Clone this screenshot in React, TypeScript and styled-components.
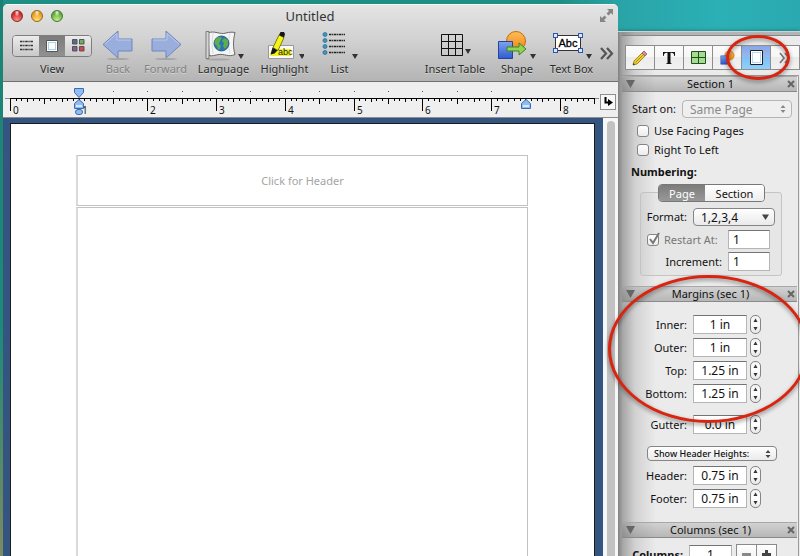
import React from "react";
import styled, { createGlobalStyle, css } from "styled-components";

const GlobalStyle = createGlobalStyle`
  * { box-sizing: border-box; }
  html, body { margin: 0; padding: 0; overflow: hidden; }
  body, button, input, select {
    font-family: "Noto Sans", "Open Sans", sans-serif;
    font-size: 11px;
    color: #111;
  }
  button { padding: 0; border: 0; background: none; }
  svg { display: block; flex: none; }
`;

const Desktop = styled.div`
  position: relative;
  display: grid;
  grid-template-columns: minmax(0, 1fr) 182px;
  height: 100vh;
  padding-left: 3px;
  overflow: hidden;
  background:
    linear-gradient(to bottom, #1b8273 0%, #1f8a78 60%, #4f8a68 80%, #7b8a62 100%) left / 3px 100% no-repeat,
    linear-gradient(to right, #1f8f84 0%, #1f8f84 70%, #29a5a8 78%, #2bb0b5 90%, #2aa9b0 100%);
`;

/* ---------- document window ---------- */

const Window = styled.main`
  position: relative;
  z-index: 1;
  display: flex;
  flex-direction: column;
  min-width: 0;
  margin-top: 4px;
  border-radius: 5px 5px 0 0;
  overflow: hidden;
  background: #efefef;
`;

const Chrome = styled.header`
  border-top: 1px solid #f6f6f6;
  border-bottom: 1px solid #6f6f6f;
  background: linear-gradient(#e4e4e4, #d2d2d2 45%, #b4b4b4);
`;

const TitleBar = styled.div`
  display: grid;
  grid-template-columns: 70px 1fr 70px;
  align-items: center;
  height: 21px;
  padding: 0 4px 0 8px;
`;

const Lights = styled.div`
  display: flex;
  gap: 8px;
`;

const Light = styled.button<{ $from: string; $to: string; $rim: string }>`
  width: 12px;
  height: 12px;
  border: 1px solid ${(p) => p.$rim};
  border-radius: 50%;
  background:
    radial-gradient(ellipse at 50% 15%, rgba(255, 255, 255, 0.9), transparent 35%),
    radial-gradient(circle at 50% 90%, ${(p) => p.$to}, ${(p) => p.$from} 70%);
`;

const Title = styled.h1`
  margin: 0 5px 0 0;
  font-size: 13px;
  line-height: 20px;
  font-weight: 400;
  text-align: center;
  color: #333;
`;

const FullScreen = styled.button`
  justify-self: end;
`;

const Toolbar = styled.nav`
  display: flex;
  height: 55px;
  padding: 4px 3px 0 9px;
`;

const Tool = styled.div<{ $width: number }>`
  display: flex;
  flex-direction: column;
  align-items: center;
  width: ${(p) => p.$width}px;
`;

const ToolButton = styled.button<{ $width: number }>`
  display: flex;
  flex-direction: column;
  align-items: center;
  width: ${(p) => p.$width}px;
`;

const ToolIcon = styled.span`
  display: flex;
  align-items: center;
  justify-content: center;
  height: 31px;
`;

const ToolLabel = styled.span<{ $dim?: boolean }>`
  line-height: 16px;
  white-space: nowrap;
  color: ${(p) => (p.$dim ? "#828282" : "#2c2c2c")};
  text-shadow: 0 1px 0 rgba(255, 255, 255, 0.4);
`;

const Spacer = styled.div`
  flex: 1;
`;

const Gap = styled.div`
  width: 3px;
`;

const More = styled.button`
  width: 16px;
  height: 48px;
`;

const ViewSwitch = styled.div`
  display: flex;
  width: 80px;
  height: 22px;
  border: 1px solid #7d7d7d;
  border-radius: 4px;
  overflow: hidden;
`;

const ViewButton = styled.button<{ $on?: boolean }>`
  display: flex;
  flex: 1;
  align-items: center;
  justify-content: center;
  background: ${(p) => (p.$on ? "linear-gradient(#7b7b7b, #919191)" : "linear-gradient(#ececec, #c9c9c9)")};
`;

const RulerBar = styled.div`
  position: relative;
  display: flex;
  height: 36px;
  border-bottom: 1px solid #8d8d8d;
  background: #efefef;
`;

const RulerScale = styled.div`
  flex: 1;
  min-width: 0;
  overflow: hidden;
`;

const TabButton = styled.button`
  display: flex;
  align-items: center;
  justify-content: center;
  width: 16px;
  height: 16px;
  margin: 12px 2px 0 0;
  border: 1px solid #8f8f8f;
  background: #f8f8f8;
`;

const Workspace = styled.div`
  display: flex;
  flex: 1;
  min-height: 0;
`;

const Canvas = styled.div`
  display: flex;
  flex: 1;
  min-width: 0;
  padding: 5px 8px 0 7px;
  background: #34557f;
`;

const Paper = styled.article`
  display: flex;
  flex: 1;
  flex-direction: column;
  gap: 1px;
  padding: 31px 66px 0 65px;
  border: 1px solid #1c1c1c;
  border-width: 1px 1px 0;
  background: #fff;
`;

const frame = css`
  border: 1px solid #c2c2c2;
  border-left: 2px solid #dadada;
`;

const HeaderArea = styled.button`
  ${frame}
  height: 51px;
  font-size: 11px;
  color: #a4a4a4;
`;

const BodyArea = styled.div`
  ${frame}
  flex: 1;
  border-bottom: 0;
`;

const ScrollTrack = styled.div`
  width: 15px;
  padding: 3px 3px 0 4px;
  background: #f7f7f7;
`;

const ScrollThumb = styled.div`
  height: 100%;
  border-radius: 4px 4px 0 0;
  background: #c2c2c2;
`;

/* ---------- inspector ---------- */

const Inspector = styled.aside`
  display: flex;
  flex-direction: column;
  min-height: 0;
  margin-top: 31px;
  padding-left: 3px;
  border-top: 1px solid #d0d0d0;
  background:
    linear-gradient(to right, #808080, #9c9c9c 3px, rgba(125, 125, 125, 0.65) 4px, rgba(150, 150, 150, 0.3) 17px, transparent 38px),
    linear-gradient(#b4b4b4 3px, #858585 3px, #858585 4px, #ebebeb 4px);
  box-shadow: 0 0 4px rgba(0, 0, 0, 0.35);
`;

const Tabs = styled.div`
  display: flex;
  height: 25px;
  margin: 13px 0 5px 4px;
  border: 1px solid #8e8e8e;
  border-right-width: 1px;
`;

const Tab = styled.button<{ $on?: boolean }>`
  display: flex;
  flex: 1;
  align-items: center;
  justify-content: center;
  border-right: 1px solid #8e8e8e;
  background: ${(p) =>
    p.$on
      ? "linear-gradient(#86a8e6, #9bb9ee 50%, #7cc0f6 50%, #90d0fa)"
      : "linear-gradient(#fbfbfb, #f6f6f6 50%, #ececec 50%, #f2f2f2)"};
  &:last-child { border-right: 0; }
`;

const Sections = styled.div`
  flex: 1;
  min-height: 0;
  margin-right: 1px;
  border: 1px solid #9a9a9a;
  border-width: 1px 1px 0;
  overflow: hidden;
`;

const SectionHead = styled.h2`
  display: grid;
  grid-template-columns: 16px 1fr 16px;
  align-items: center;
  height: 16px;
  margin: 0 1px 0 0;
  padding: 0 2px 0 4px;
  border-top: 1px solid #a8a8a8;
  border-bottom: 1px solid #8a8a8a;
  background: linear-gradient(rgba(150, 150, 150, 0.3), rgba(110, 110, 110, 0.42));
  font-size: 11px;
  line-height: 14px;
  font-weight: 400;
  text-align: center;
`;

const CloseButton = styled.button`
  justify-self: end;
`;

const Body = styled.div<{ $top: number; $height?: number }>`
  padding-top: ${(p) => p.$top}px;
  ${(p) => p.$height && `height: ${p.$height}px;`}
`;

const Row = styled.div<{ $gap?: number }>`
  display: flex;
  align-items: center;
  height: 19px;
  margin-bottom: ${(p) => p.$gap ?? 4}px;
`;

const Label = styled.label<{ $width: number; $bold?: boolean; $dim?: boolean }>`
  width: ${(p) => p.$width}px;
  padding-right: 6px;
  line-height: 19px;
  text-align: right;
  white-space: nowrap;
  font-weight: ${(p) => (p.$bold ? 700 : 400)};
  color: ${(p) => (p.$dim ? "#777" : "#111")};
`;

const Check = styled.label<{ $dim?: boolean }>`
  display: flex;
  align-items: center;
  gap: 5px;
  height: 19px;
  padding-left: 15px;
  white-space: nowrap;
  color: ${(p) => (p.$dim ? "#777" : "#111")};
`;

const Box = styled.input`
  appearance: none;
  width: 12px;
  height: 12px;
  margin: 0;
  border: 1px solid #858585;
  border-radius: 3px;
  background: linear-gradient(#fff, #ececec);
`;

const CheckWrap = styled.span`
  position: relative;
  display: flex;
  svg { position: absolute; left: 0; bottom: 0; }
`;

const RestartCheck = styled(Check)`
  width: 87px;
  padding-left: 6px;
`;

const Field = styled.input<{ $width: number; $left?: boolean }>`
  width: ${(p) => p.$width}px;
  height: 19px;
  padding: ${(p) => (p.$left ? "0 4px" : "0")};
  border: 1px solid #b5b5b5;
  border-top-color: #747474;
  border-radius: 0;
  background: #fff;
  font-size: 12px;
  text-align: ${(p) => (p.$left ? "left" : "center")};
`;

const SelectWrap = styled.span<{ $width: number }>`
  position: relative;
  display: flex;
  width: ${(p) => p.$width}px;
  svg { position: absolute; right: 6px; top: 50%; margin-top: -5px; pointer-events: none; }
`;

const Select = styled.select<{ $height: number; $pad: number; $small?: boolean }>`
  appearance: none;
  width: 100%;
  height: ${(p) => p.$height}px;
  padding: 0 0 0 ${(p) => p.$pad}px;
  border: 1px solid #858585;
  border-radius: 4px;
  background: linear-gradient(#fff, #f4f4f4 50%, #eaeaea);
  font-size: ${(p) => (p.$small ? 9 : 12)}px;
  ${(p) => p.$small && "font-weight: 500;"}
  &:disabled { opacity: 1; color: #8a8a8a; border-color: #b5b5b5; background: #efefef; }
`;

const Numbering = styled.h3`
  margin: 3px 0 0 9px;
  font-size: 11px;
  line-height: 19px;
  font-weight: 700;
`;

const Group = styled.div`
  height: 84px;
  margin: 11px 16px 9px 18px;
  border: 1px solid #c4c4c4;
  border-radius: 3px;
  background: rgba(0, 0, 0, 0.02);
`;

const Segments = styled.div`
  display: flex;
  width: 107px;
  height: 18px;
  margin: -9px auto 5px 17px;
  border: 1px solid #777;
  border-radius: 4px;
  overflow: hidden;
`;

const Segment = styled.button<{ $on?: boolean; $width: number }>`
  width: ${(p) => p.$width}px;
  line-height: 15px;
  color: ${(p) => (p.$on ? "#fff" : "#111")};
  background: ${(p) => (p.$on ? "linear-gradient(#7c7c7c, #989898)" : "linear-gradient(#fff, #eee)")};
`;

const Stepper = styled.span`
  display: flex;
  flex-direction: column;
  width: 11px;
  height: 19px;
  margin-left: 3px;
  border: 1px solid #858585;
  border-radius: 5px;
  overflow: hidden;
  background: linear-gradient(#f2f2f2, #fff 50%, #e6e6e6);
`;

const Step = styled.button`
  display: flex;
  flex: 1;
  align-items: center;
  justify-content: center;
`;

const HeightsRow = styled.div`
  margin: 12px 0 5px 25px;
`;

const SquareButton = styled.button`
  display: flex;
  align-items: center;
  justify-content: center;
  width: 21px;
  height: 21px;
  margin-right: -1px;
  border: 1px solid #8a8a8a;
  background: linear-gradient(#fff, #ededed);
`;

const Minus = styled(SquareButton)`
  margin-left: 4px;
`;

/* Hand-drawn emphasis rings laid over the desktop. */
const Ring = styled.div<{ $right: number; $top: number; $width: number; $height: number }>`
  position: absolute;
  z-index: 2;
  right: ${(p) => p.$right}px;
  top: ${(p) => p.$top}px;
  width: ${(p) => p.$width}px;
  height: ${(p) => p.$height}px;
  border: 3px solid #d9240f;
  border-radius: 50%;
  filter: drop-shadow(0 2px 2px rgba(0, 0, 0, 0.45));
  pointer-events: none;
`;

/* ---------- icons ---------- */

const Caret = ({ x, y }: { x: number; y: number }) => <path d={`M${x} ${y}h6l-3 5z`} fill="#333" />;

const ArrowIcon = ({ flip }: { flip?: boolean }) => (
  <svg width="32" height="31" viewBox="0 0 32 31">
    <ellipse cx="16" cy="29" rx="11" ry="1" fill="#888" opacity=".5" />
    <g transform={flip ? "translate(32 0) scale(-1 1)" : undefined}>
      <path d="M1 14.500 16 1v8h14v12H16v7z" fill="#99aedc" stroke="#6f86bd" />
      <path d="M3 14 15 3.500V10h14" fill="none" stroke="#bccbee" />
    </g>
  </svg>
);

const LanguageIcon = () => (
  <svg width="40" height="31" viewBox="0 0 40 31">
    <ellipse cx="14" cy="29.500" rx="12" ry="1" fill="#888" opacity=".5" />
    <path d="M4 3c6-3 12 2 18 0 4-1 6-1 9-.500-2 8-2 15 0 22-6 3-11-1-16 0-4 .500-7 2-10 1z" fill="#f5f5f5" stroke="#666" />
    <path d="M2 1.500h3v27H2z" fill="#d5d5d5" stroke="#666" strokeWidth=".8" />
    <path d="M9 3c-1 7-1 14 0 21M26 3c-2 7-2 14 0 21" fill="none" stroke="#ddd" />
    <circle cx="17.500" cy="13.500" r="7.500" fill="#2b74b5" stroke="#184f80" strokeWidth=".8" />
    <path d="M12 9c2-3 5-2 6-1l-2 3-1 3 2 2-2 4c-2-1-1-4-3-5s-2-4 0-6zM20 8l4 2 0 5-3 4-2-3 1-3-2-2z" fill="#5fae4d" />
    <Caret x={34} y={24} />
  </svg>
);

const HighlightIcon = () => (
  <svg width="38" height="31" viewBox="0 0 38 31">
    <path d="M2.500 15.500h25v13h-25z" fill="#fafafa" stroke="#999" />
    <path d="M6 19h19v7H4z" fill="#f3f31a" />
    <text x="12" y="25" fontSize="9" fontFamily="Liberation Sans, sans-serif" fill="#222">abc</text>
    <path d="M13 5l5 2.500-6 13-5-3z" fill="#f4f41c" stroke="#7b7b10" />
    <path d="M13 5l1.500-3h3.500l1 2-1 3.500zM6.500 17.500l5 3-3 3-4 1z" fill="#161616" />
    <Caret x={33} y={24} />
  </svg>
);

const ListIcon = () => (
  <svg width="36" height="31" viewBox="0 0 36 31">
    {[4, 10, 16, 22].map((y) => (
      <g key={y}>
        <circle cx="3" cy={y + 0.5} r="2" fill="#3d96c6" stroke="#23658c" strokeWidth=".7" />
        <path d={`M7 ${y + 0.5}h16`} stroke="#222" strokeWidth="1.500" strokeDasharray="2.500 .6 1.300 .6" />
      </g>
    ))}
    <Caret x={30} y={24} />
  </svg>
);

const TableIcon = () => (
  <svg width="31" height="31" viewBox="0 0 31 31">
    <path d="M1.500 4.500h21v21h-21zM8.500 4.500v21M15.500 4.500v21M1.500 11.500h21M1.500 18.500h21" fill="none" stroke="#111" />
    <Caret x={25} y={19} />
  </svg>
);

const ShapesArt = () => (
  <>
    <defs>
      <linearGradient id="orange" x2="0" y2="1"><stop stopColor="#fdbd5a" /><stop offset="1" stopColor="#ee8510" /></linearGradient>
      <linearGradient id="blue" x2="0" y2="1"><stop stopColor="#7fa2ef" /><stop offset="1" stopColor="#2f5bd0" /></linearGradient>
    </defs>
    <circle cx="19" cy="11" r="9.500" fill="url(#orange)" stroke="#c66b0c" />
    <path d="M1.500 11.500h14v17h-14z" fill="url(#blue)" stroke="#2343a0" />
  </>
);

const ShapeIcon = () => (
  <svg width="40" height="31" viewBox="0 0 40 31">
    <ShapesArt />
    <path d="M10 17h12v-4l7 6-7 6v-4H10z" fill="#8fd456" stroke="#3f8420" />
    <Caret x={33} y={24} />
  </svg>
);

const TextBoxIcon = () => (
  <svg width="42" height="31" viewBox="0 0 42 31">
    <path d="M4.500 5.500h25v15h-25z" fill="#fff" stroke="#333" />
    <text x="17" y="17" fontSize="11" textAnchor="middle" fontFamily="Liberation Sans, sans-serif" fill="#000" stroke="#000" strokeWidth=".3">Abc</text>
    {[[2.5, 3.5], [27.5, 3.5], [2.5, 18.5], [27.5, 18.5]].map(([x, y]) => (
      <rect key={`${x}-${y}`} x={x} y={y} width="4" height="4" fill="#dbe5ff" stroke="#2e55a8" />
    ))}
    <Caret x={35} y={24} />
  </svg>
);

const Chevrons = ({ color }: { color: string }) => (
  <svg width="15" height="48" viewBox="0 0 15 48">
    <path d="M2 18l5 5.500-5 5.500M8 18l5 5.500L8 29" fill="none" stroke={color} strokeWidth="2.200" />
  </svg>
);

const Triangle = () => (
  <svg width="9" height="8" viewBox="0 0 9 8"><path d="M0 0h9L4.500 8z" fill="#666" /></svg>
);

const Cross = () => (
  <svg width="8" height="8" viewBox="0 0 8 8"><path d="M1 1l6 6M7 1L1 7" stroke="#666" strokeWidth="2" /></svg>
);

const UpDown = ({ color = "#444" }: { color?: string }) => (
  <svg width="6" height="10" viewBox="0 0 6 10"><path d="M0.500 4L3 1l2.500 3zM0.500 6L3 9l2.500-3z" fill={color} /></svg>
);

const INCH = 68.7;

const Ruler = () => {
  const ticks: string[] = [];
  for (let i = 0; i <= 102; i += 1) {
    const x = Math.round(7 + (i * INCH) / 12) + 0.5;
    const end = i % 12 === 0 ? 29 : i % 6 === 0 ? 22 : i % 3 === 0 ? 20 : 19;
    ticks.push(`M${x} 16V${end}`);
  }
  const whole = Array.from({ length: 9 }, (_, i) => i);
  const dots = Array.from({ length: 12 }, (_, i) => 1.5 + i * 0.5);
  const pin = "M-4.500 9.500h9V4.500L0 .500l-4.500 4z";
  return (
    <svg width="596" height="35" viewBox="0 0 596 35">
      <path d="M2 16.500h6M592 16.500h4" stroke="#888" />
      <path d="M7 16.500h585" stroke="#000" />
      <path d={ticks.join("")} stroke="#000" />
      {dots.map((d) => <rect key={d} x={Math.round(7 + d * INCH)} y="9" width="1" height="1" fill="#555" />)}
      {whole.map((n) => (
        <text key={n} x={Math.round(10 + n * INCH)} y="32" fontSize="10" fill="#111">{n}</text>
      ))}
      <g fill="#8ebcf5" stroke="#3f6cb0">
        <path d="M-4.500 .500h9v4L0 9.500l-4.500-5z" transform="translate(76 6)" />
        <path d={pin} transform="translate(76 17)" />
        <rect x="72.500" y="27.500" width="7" height="5" rx="2.500" />
        <path d={pin} transform="translate(523 17)" />
      </g>
      <path d="M73 24h6M520 24h6" stroke="#d5e9ff" strokeWidth="2" />
    </svg>
  );
};

/* ---------- composed parts ---------- */

const Head = ({ title }: { title: string }) => (
  <SectionHead>
    <button aria-label={`Collapse ${title}`}><Triangle /></button>
    <span>{title}</span>
    <CloseButton aria-label={`Close ${title}`}><Cross /></CloseButton>
  </SectionHead>
);

const Measure = ({ name, value, gap }: { name: string; value: string; gap?: number }) => {
  const id = `measure-${name.toLowerCase()}`;
  return (
    <Row $gap={gap}>
      <Label htmlFor={id} $width={71}>{name}:</Label>
      <Field id={id} $width={54} defaultValue={value} />
      <Stepper>
        <Step aria-label={`Increase ${name}`}>
          <svg width="5" height="4" viewBox="0 0 5 4"><path d="M0.500 4L2.500 0.500 4.500 4z" fill="#333" /></svg>
        </Step>
        <Step aria-label={`Decrease ${name}`}>
          <svg width="5" height="4" viewBox="0 0 5 4"><path d="M0.500 0h4L2.500 3.500z" fill="#333" /></svg>
        </Step>
      </Stepper>
    </Row>
  );
};

const DocumentWindow = () => (
  <Window>
    <Chrome>
      <TitleBar>
        <Lights>
          <Light aria-label="Close" $from="#c8282a" $to="#ff8f86" $rim="#8a2a28" />
          <Light aria-label="Minimize" $from="#e59a1c" $to="#ffe27a" $rim="#96661c" />
          <Light aria-label="Zoom" $from="#5fa83a" $to="#c6f08e" $rim="#447a2c" />
        </Lights>
        <Title>Untitled</Title>
        <FullScreen aria-label="Full screen">
          <svg width="15" height="15" viewBox="0 0 15 15" fill="#858585">
            <path d="M8 1h6v6l-2-2-2.500 2.500-2-2L10 3zM1 8l2 2 2.500-2.500 2 2L5 12l2 2H1z" />
          </svg>
        </FullScreen>
      </TitleBar>
      <Toolbar>
        <Tool $width={80}>
          <ToolIcon>
            <ViewSwitch>
              <ViewButton aria-label="Draft view">
                <svg width="13" height="11" viewBox="0 0 13 11">
                  <path d="M0 1.500h13M0 5.500h13M0 9.500h13" stroke="#333" strokeWidth="1.500" strokeDasharray="2.500 .7 1.300 .7" />
                </svg>
              </ViewButton>
              <ViewButton $on aria-label="Page view">
                <svg width="12" height="12" viewBox="0 0 12 12">
                  <path d="M.5.500h11v11H.5z" fill="#fff" stroke="#555" />
                  <path d="M2.500 2.500h7v7h-7z" fill="none" stroke="#4aa9dd" strokeDasharray="1 1" />
                </svg>
              </ViewButton>
              <ViewButton aria-label="Thumbnail view">
                <svg width="13" height="13" viewBox="0 0 13 13" stroke="#555">
                  <path d="M.5.500h4.500v4.500H.5z" fill="#4f6f96" />
                  <path d="M7.500.500H12v4.500H7.500z" fill="#6fae5c" />
                  <path d="M.5 7.500h4.500V12H.5z" fill="#8a5c98" />
                  <path d="M7.500 7.500H12V12H7.500z" fill="#d84444" />
                </svg>
              </ViewButton>
            </ViewSwitch>
          </ToolIcon>
          <ToolLabel>View</ToolLabel>
        </Tool>
        <Gap />
        <ToolButton $width={46}><ToolIcon><ArrowIcon /></ToolIcon><ToolLabel $dim>Back</ToolLabel></ToolButton>
        <ToolButton $width={49}><ToolIcon><ArrowIcon flip /></ToolIcon><ToolLabel $dim>Forward</ToolLabel></ToolButton>
        <ToolButton $width={67}><ToolIcon><LanguageIcon /></ToolIcon><ToolLabel>Language</ToolLabel></ToolButton>
        <ToolButton $width={55}><ToolIcon><HighlightIcon /></ToolIcon><ToolLabel>Highlight</ToolLabel></ToolButton>
        <ToolButton $width={55}><ToolIcon><ListIcon /></ToolIcon><ToolLabel>List</ToolLabel></ToolButton>
        <Spacer />
        <ToolButton $width={70}><ToolIcon><TableIcon /></ToolIcon><ToolLabel>Insert Table</ToolLabel></ToolButton>
        <ToolButton $width={54}><ToolIcon><ShapeIcon /></ToolIcon><ToolLabel>Shape</ToolLabel></ToolButton>
        <ToolButton $width={55}><ToolIcon><TextBoxIcon /></ToolIcon><ToolLabel>Text Box</ToolLabel></ToolButton>
        <More aria-label="More tools"><Chevrons color="#555" /></More>
      </Toolbar>
    </Chrome>
    <RulerBar>
      <RulerScale><Ruler /></RulerScale>
      <TabButton aria-label="Tab stop">
        <svg width="9" height="10" viewBox="0 0 9 10">
          <path d="M1.500 0v5.500H5" fill="none" stroke="#000" strokeWidth="2" /><path d="M4 2l5 3.500L4 9z" />
        </svg>
      </TabButton>
    </RulerBar>
    <Workspace>
      <Canvas>
        <Paper>
          <HeaderArea>Click for Header</HeaderArea>
          <BodyArea />
        </Paper>
      </Canvas>
      <ScrollTrack><ScrollThumb /></ScrollTrack>
    </Workspace>
  </Window>
);

const InspectorPanel = () => (
  <Inspector>
    <Tabs>
      <Tab aria-label="Style">
        <svg width="16" height="16" viewBox="0 0 16 16">
          <path d="M1 15l1-4 8-8 3 3-8 8z" fill="#eccb2c" stroke="#8a7420" strokeWidth=".8" />
          <path d="M3.500 12.500l8-8" stroke="#b5941b" />
          <path d="M10 3l2-2 3 3-2 2z" fill="#e08a96" stroke="#8c5660" strokeWidth=".8" />
          <path d="M1 15l.6-2 1.400 1.400z" fill="#222" />
        </svg>
      </Tab>
      <Tab aria-label="Text">
        <svg width="14" height="14" viewBox="0 0 14 14">
          <path d="M1 1h12v4h-.7c-.3-2.200-1-3.200-3-3.200h-.8v9.700c0 1 .5 1 1.500 1.200v.3H4v-.3c1-.2 1.500-.2 1.500-1.200V1.800h-.8c-2 0-2.700 1-3 3.200H1z" fill="#111" />
        </svg>
      </Tab>
      <Tab aria-label="Table">
        <svg width="15" height="13" viewBox="0 0 15 13">
          <path d="M.5.500h14v12H.5zM7.500.500v12M.5 6.500h14" fill="#a4dd92" stroke="#244d1c" />
        </svg>
      </Tab>
      <Tab aria-label="Shape"><svg width="15" height="15" viewBox="0 0 30 30"><ShapesArt /></svg></Tab>
      <Tab $on aria-label="Section">
        <svg width="13" height="15" viewBox="0 0 13 15">
          <path d="M.5.500h12v14H.5z" fill="#fff" stroke="#222" />
          <path d="M2.500 2.500h8v10h-8z" fill="none" stroke="#6cb5e2" strokeDasharray="1 1" />
        </svg>
      </Tab>
      <Tab aria-label="More">
        <svg width="12" height="12" viewBox="0 0 12 12"><path d="M1 1l4 5-4 5M6 1l4 5-4 5" fill="none" stroke="#777" strokeWidth="1.700" /></svg>
      </Tab>
    </Tabs>
    <Sections>
      <Head title="Section 1" />
      <Body $top={7} $height={194}>
        <Row $gap={3}>
          <Label htmlFor="start" $width={60}>Start on:</Label>
          <SelectWrap $width={110}>
            <Select id="start" disabled $height={18} $pad={7}><option>Same Page</option></Select>
            <UpDown color="#888" />
          </SelectWrap>
        </Row>
        <Check><Box type="checkbox" />Use Facing Pages</Check>
        <Check><Box type="checkbox" />Right To Left</Check>
        <Numbering>Numbering:</Numbering>
        <Group>
          <Segments>
            <Segment $on $width={46}>Page</Segment>
            <Segment $width={59}>Section</Segment>
          </Segments>
          <Row>
            <Label htmlFor="format" $width={52}>Format:</Label>
            <SelectWrap $width={82}>
              <Select id="format" $height={18} $pad={7}><option>1,2,3,4</option></Select>
              <svg width="7" height="10" viewBox="0 0 7 10"><path d="M0 2.500h7L3.500 8z" fill="#444" /></svg>
            </SelectWrap>
          </Row>
          <Row $gap={3}>
            <RestartCheck $dim>
              <CheckWrap>
                <Box type="checkbox" defaultChecked disabled />
                <svg width="14" height="14" viewBox="0 0 14 14"><path d="M3 7l3 4 6-10" fill="none" stroke="#777" strokeWidth="2" /></svg>
              </CheckWrap>
              Restart At:
            </RestartCheck>
            <Field aria-label="Restart at" $width={42} $left defaultValue="1" />
          </Row>
          <Row>
            <Label htmlFor="increment" $width={87}>Increment:</Label>
            <Field id="increment" $width={42} $left defaultValue="1" />
          </Row>
        </Group>
      </Body>
      <Head title="Margins (sec 1)" />
      <Body $top={13} $height={220}>
        <Measure name="Inner" value="1 in" />
        <Measure name="Outer" value="1 in" />
        <Measure name="Top" value="1.25 in" />
        <Measure name="Bottom" value="1.25 in" gap={12} />
        <Measure name="Gutter" value="0.0 in" />
        <HeightsRow>
          <SelectWrap $width={130}>
            <Select aria-label="Header heights" $small $height={15} $pad={6}><option>Show Header Heights:</option></Select>
            <UpDown />
          </SelectWrap>
        </HeightsRow>
        <Measure name="Header" value="0.75 in" />
        <Measure name="Footer" value="0.75 in" />
      </Body>
      <Head title="Columns (sec 1)" />
      <Body $top={7}>
        <Row>
          <Label htmlFor="columns" $width={67} $bold>Columns:</Label>
          <Field id="columns" $width={43} defaultValue="1" />
          <Minus aria-label="Fewer columns">
            <svg width="9" height="9" viewBox="0 0 9 9"><path d="M0 4.500h9" stroke="#888" strokeWidth="3" /></svg>
          </Minus>
          <SquareButton aria-label="More columns">
            <svg width="9" height="9" viewBox="0 0 9 9"><path d="M0 4.500h9M4.500 0v9" stroke="#444" strokeWidth="3" /></svg>
          </SquareButton>
        </Row>
      </Body>
    </Sections>
  </Inspector>
);

export default function App() {
  return (
    <>
      <GlobalStyle />
      <Desktop>
        <DocumentWindow />
        <InspectorPanel />
        <Ring $right={10} $top={35} $width={64} $height={45} />
        <Ring $right={-9} $top={275} $width={201} $height={148} />
      </Desktop>
    </>
  );
}
